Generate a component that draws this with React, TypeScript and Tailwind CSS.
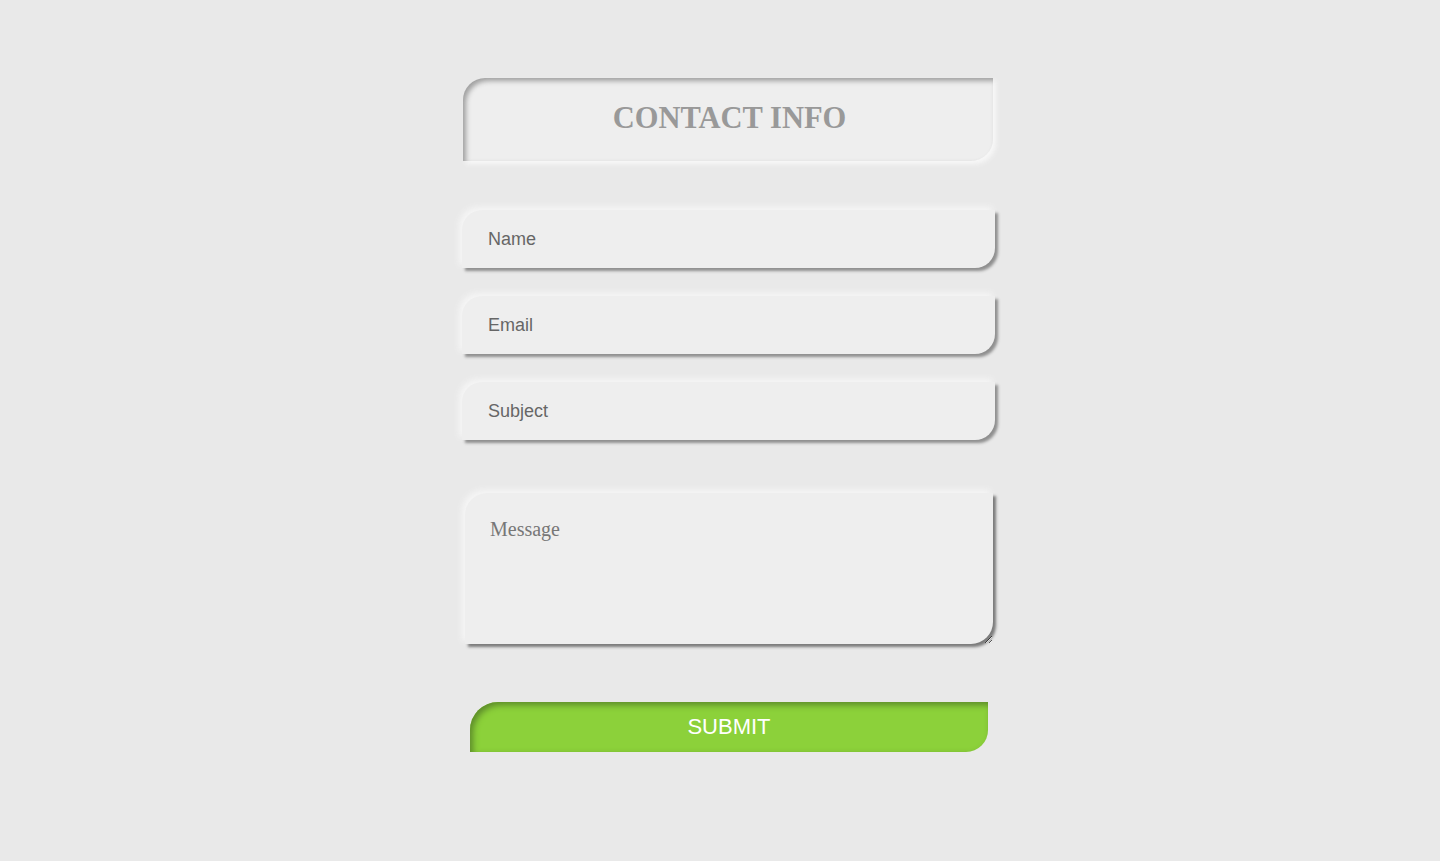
const fieldClass =
  "w-[533px] h-[58px] bg-[#eeeeee] rounded-tl-[20px] rounded-br-[20px] pl-[26px] pr-4 text-[18px] text-[#666] placeholder:text-[#666] outline-none border-0 font-['Liberation_Sans',Arial,sans-serif] shadow-[3px_3px_3px_#8f8f8f,-3px_-3px_6px_#f6f6f6]";

export default function App() {
  return (
    <div className="min-h-[861px] w-full bg-[#e9e9e9] flex justify-center pl-[18px]">
      <form className="flex flex-col w-[534px] pt-[78px]" onSubmit={(e) => e.preventDefault()}>
        <div className="ml-px w-[530px] h-[83px] bg-[#eeeeee] rounded-tl-[22px] rounded-br-[22px] flex items-center justify-center pb-[1px] pl-[3px] shadow-[inset_3px_3px_5px_#a0a0a0,3px_3px_5px_#f8f8f8]">
          <h1 className="font-['Liberation_Serif','Times_New_Roman',serif] font-bold text-[30.5px] text-[#999]">
            CONTACT INFO
          </h1>
        </div>

        <div className="flex flex-col gap-[28px] mt-[49px]">
          <input className={fieldClass} type="text" placeholder="Name" />
          <input className={fieldClass} type="email" placeholder="Email" />
          <input className={fieldClass} type="text" placeholder="Subject" />
        </div>

        <textarea
          className="mt-[53px] ml-[3px] w-[528px] h-[151px] bg-[#eeeeee] rounded-tl-[22px] rounded-br-[22px] px-[25px] pt-[21px] pb-6 text-[20px] text-[#666] placeholder:text-[#777] outline-none border-0 font-['Liberation_Serif','Times_New_Roman',serif] shadow-[3px_3px_3px_#7a7a7a,-3px_-3px_6px_#f6f6f6]"
          placeholder="Message"
        />

        <button
          type="submit"
          className="mt-[58px] ml-[8px] w-[518px] h-[50px] bg-[#8cd13a] rounded-tl-[28px] rounded-br-[22px] text-white text-[22px] pb-[2px] font-['Liberation_Sans',Arial,sans-serif] shadow-[inset_3px_3px_6px_#5c8a2a]"
        >
          SUBMIT
        </button>
      </form>
    </div>
  );
}
